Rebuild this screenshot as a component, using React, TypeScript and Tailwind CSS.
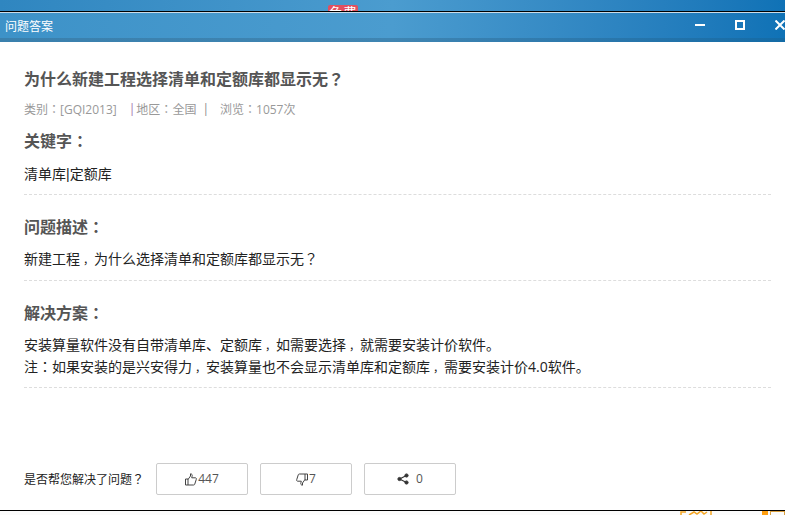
const font = { fontFamily: '"Open Sans", "Noto Sans CJK SC", sans-serif' }

// the reference centres full-width punctuation in its cell, the TC cut does that for : and ?
function Zh({ text }: { text: string }) {
  return (
    <>
      {text.split(/([：？，])/).map((part, i) => {
        if (part === '：' || part === '？') {
          return (
            <span key={i} className="font-['Noto_Sans_CJK_TC']">
              {part}
            </span>
          )
        }
        if (part === '，') {
          return (
            <span key={i} className="pl-[3px] text-[11px]">
              {part}
            </span>
          )
        }
        return part
      })}
    </>
  )
}

function Section({ title, children }: { title: string; children: React.ReactNode }) {
  return (
    <section className="mr-[14px] border-b border-dashed border-[#dddddd]">
      <h2 className="text-[16px] leading-[24px] font-bold text-[#555555]">
        <Zh text={title} />
      </h2>
      <div className="mt-[9px] text-[14px] leading-[22px] text-[#222222]">{children}</div>
    </section>
  )
}

function ThumbUp() {
  return (
    <svg width="12" height="13" viewBox="0 0 12 13" fill="none" stroke="#444444" strokeWidth="1">
      <path d="M.5 6h2.500v6H.5zM3 6.500 5.500 3V.8c1.400 0 2 1 1.600 2.400L6.700 4.800h3.600c.9 0 1.300.8 1 1.500l-1.600 5c-.2.500-.6.700-1.100.7H3" />
    </svg>
  )
}

function ThumbDown() {
  return (
    <svg width="12" height="13" viewBox="0 0 12 13" fill="none" stroke="#444444" strokeWidth="1">
      <path d="M11.500 7H9V1h2.500zM9 6.500 6.500 10v2.200c-1.400 0-2-1-1.600-2.400L5.300 8.200H1.700c-.9 0-1.300-.8-1-1.500l1.600-5c.2-.5.6-.7 1.100-.7H9" />
    </svg>
  )
}

function Share() {
  return (
    <svg width="12" height="12" viewBox="0 0 12 12" fill="#333333" stroke="#333333">
      <circle cx="2.500" cy="6" r="1.600" />
      <circle cx="9.500" cy="2.500" r="1.600" />
      <circle cx="9.500" cy="9.500" r="1.600" />
      <path d="M2.500 6 9.500 2.500M2.500 6l7 3.500" strokeWidth="1.200" />
    </svg>
  )
}

function VoteButton({ icon, label, gap }: { icon: React.ReactNode; label: string; gap: string }) {
  return (
    <button className={`flex h-[32px] w-[92px] items-center justify-center rounded-[2px] border border-[#cccccc] bg-white text-[12px] text-[#555555] ${gap}`}>
      {icon}
      <span>{label}</span>
    </button>
  )
}

export default function App() {
  return (
    <div className="flex h-[515px] w-[785px] flex-col overflow-hidden bg-white" style={font}>
      {/* parent window peeking out above */}
      <div className="h-[11px] shrink-0 overflow-hidden bg-gradient-to-r from-[#2f86c0] via-[#4b9ccf] to-[#0f72b6] pt-[5px] pl-[328px]">
        <div className="h-[16px] w-[30px] rounded-t-[2px] bg-[#e2505f] text-center text-[14px] leading-[16px] text-white">
          免费
        </div>
      </div>
      <div className="h-[1px] shrink-0 bg-black" />
      <div className="h-[1px] shrink-0 bg-[#c9dcea]" />

      <header className="flex h-[25px] shrink-0 items-center justify-between bg-gradient-to-r from-[#3d92c8] via-[#4b9ccf] to-[#0f72b6] pt-[3px] pl-[5px] text-[12px] text-white">
        <span>问题答案</span>
        <div className="flex items-center pb-[4px]">
          <div className="h-[2px] w-[10px] bg-white" />
          <div className="ml-[30px] h-[10px] w-[10px] border-2 border-white" />
          <svg className="ml-[30px]" width="10" height="10" viewBox="0 0 10 10" stroke="white" strokeWidth="2">
            <path d="M.5.500l9 9M9.500.500l-9 9" />
          </svg>
        </div>
      </header>
      <div className="h-[4px] shrink-0 bg-gradient-to-r from-[#3a80ad] via-[#3f85b2] to-[#136ba6]" />

      <main className="flex flex-1 flex-col pl-[24px]">
        <h1 className="mt-[25px] text-[16px] leading-[22px] font-bold text-[#555555]">
          <Zh text="为什么新建工程选择清单和定额库都显示无？" />
        </h1>
        <div className="mt-[9px] flex h-[20px] items-center text-[12px] text-[#999999]">
          <span>
            <Zh text="类别：[GQI2013]" />
          </span>
          <span className="ml-[12px] text-[#a070b0]">|</span>
          <span className="ml-[1px]">
            <Zh text="地区：全国" />
          </span>
          <span className="ml-[6px] text-[#888888]">|</span>
          <span className="ml-[11px]">
            <Zh text="浏览：1057次" />
          </span>
        </div>

        <div className="mt-[9px]">
          <Section title="关键字：">
            <p className="pt-[1px] pb-[9px]">
              清单库<span className="font-['Liberation_Sans']">|</span>定额库
            </p>
          </Section>
        </div>
        <div className="mt-[19px]">
          <Section title="问题描述：">
            <p className="-mt-[1px] pb-[9px]">
              <Zh text="新建工程，为什么选择清单和定额库都显示无？" />
            </p>
          </Section>
        </div>
        <div className="mt-[19px]">
          <Section title="解决方案：">
            <p>
              <Zh text="安装算量软件没有自带清单库、定额库，如需要选择，就需要安装计价软件。" />
            </p>
            <p className="-mt-[2px] mb-[10px] h-[22px]">
              <Zh text="注：如果安装的是兴安得力，安装算量也不会显示清单库和定额库，需要安装计价4.0软件。" />
            </p>
          </Section>
        </div>

        <div className="mt-auto mb-[15px] flex items-center">
          <span className="w-[132px] text-[12px] text-[#222222]">
            <Zh text="是否帮您解决了问题？" />
          </span>
          <div className="flex gap-[12px]">
            <VoteButton icon={<ThumbUp />} label="447" gap="gap-[1px]" />
            <VoteButton icon={<ThumbDown />} label="7" gap="gap-[1px]" />
            <VoteButton icon={<Share />} label="0" gap="gap-[7px]" />
          </div>
        </div>
      </main>

      {/* parent window peeking out below */}
      <div className="h-[1px] shrink-0 bg-black" />
      <div className="flex h-[4px] shrink-0 bg-[#fbfbfb] pl-[680px]">
        <svg width="32" height="4" viewBox="0 0 32 4" fill="none" stroke="#f5a623" strokeWidth="1.500">
          <path d="M1 4V1h5M9 4l5-3 3 2 4-3 3 3 3-2M31 0v4" />
        </svg>
        <div className="ml-[50px] h-[4px] w-[6px] bg-[#ff9f10]" />
        <div className="ml-[2px] h-[4px] w-[15px] border-x border-t border-[#d9a040]" />
      </div>
    </div>
  )
}
